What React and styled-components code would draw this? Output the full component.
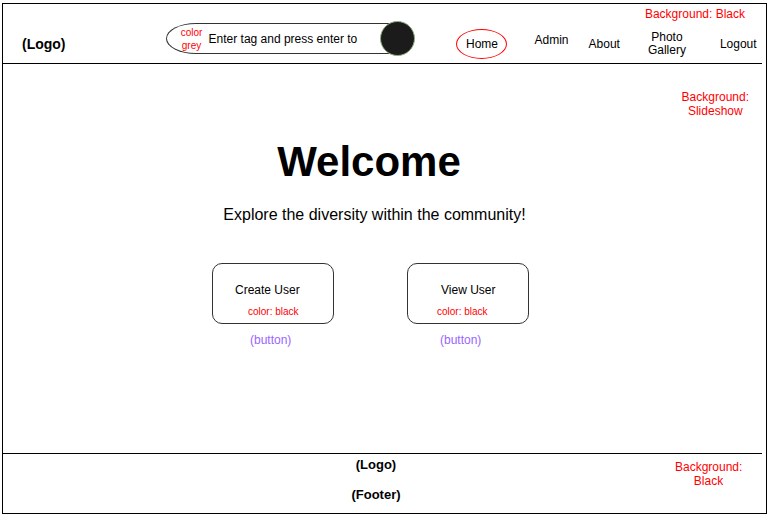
import styled, { createGlobalStyle } from "styled-components"

const Global = createGlobalStyle`
  html, body {
    margin: 0;
    background: #fff;
  }
  body {
    font-family: "Liberation Sans", Arial, sans-serif;
    color: #000;
  }
`;

const Frame = styled.div`
  box-sizing: border-box;
  width: 765px;
  height: 511px;
  margin: 3px 0 0 2px;
  border: 1px solid #000;
  display: flex;
  flex-direction: column;
`;

const Header = styled.header`
  box-sizing: border-box;
  height: 60px;
  margin-right: 4px;
  border-bottom: 1px solid #000;
  display: flex;
  flex-direction: column;
`;

const TopNote = styled.div`
  box-sizing: border-box;
  height: 17px;
  padding: 3px 17px 0 0;
  display: flex;
  justify-content: flex-end;
`;

const Note = styled.div`
  font-size: 12px;
  line-height: 14px;
  color: #f00;
  text-align: center;
`;

const NavRow = styled.nav`
  height: 42px;
  display: flex;
  align-items: flex-start;
`;

const Logo = styled.div`
  margin: 15px 0 0 19px;
  font-size: 14px;
  line-height: 16px;
  font-weight: bold;
`;

const Search = styled.div`
  margin-left: 100px;
  height: 35px;
  display: flex;
  align-items: center;
`;

const Field = styled.div`
  box-sizing: border-box;
  width: 231px;
  height: 31px;
  padding-left: 14px;
  border: 1px solid #333;
  border-right: none;
  border-radius: 30px 0 0 30px / 15.5px 0 0 15.5px;
  display: flex;
  align-items: center;
`;

const Hint = styled.div`
  width: 22px;
  font-size: 10px;
  line-height: 13px;
  color: #f00;
  text-align: center;
  padding-top: 1px;
`;

const Placeholder = styled.span`
  margin-left: 6px;
  font-size: 12px;
  line-height: 14px;
  white-space: nowrap;
`;

const GoButton = styled.div`
  box-sizing: border-box;
  flex: none;
  width: 35px;
  height: 35px;
  margin-left: -17px;
  border-radius: 50%;
  background: #1b1b1b;
  border: 1px solid #8fae7e;
`;

const HomeLink = styled.div`
  box-sizing: border-box;
  width: 51px;
  height: 30px;
  margin: 8px 0 0 41px;
  padding-left: 2px;
  border: 1px solid #f00;
  border-radius: 50%;
  display: flex;
  align-items: center;
  justify-content: center;
  font-size: 12px;
`;

const NavLink = styled.div`
  margin: ${p => p.$mt}px 0 0 ${p => p.$ml}px;
  font-size: 12px;
  line-height: ${p => (p.$two ? 13 : 14)}px;
  text-align: center;
  white-space: nowrap;
`;

const Main = styled.main`
  flex: 1;
  display: flex;
  flex-direction: column;
`;

const SideNote = styled(Note)`
  align-self: flex-end;
  margin: 26px 17px 0 0;
`;

const Hero = styled.section`
  display: flex;
  flex-direction: column;
  align-items: center;
  padding-right: 28px;
`;

const Title = styled.h1`
  margin: 20px 3px 0 0;
  font-size: 42px;
  line-height: 48px;
  font-weight: bold;
`;

const Lead = styled.p`
  margin: 20px 0 0 8px;
  font-size: 16px;
  line-height: 18px;
`;

const ButtonRow = styled.div`
  margin-top: 39px;
  display: flex;
  gap: 73px;
`;

const ButtonCol = styled.div`
  display: flex;
  flex-direction: column;
  align-items: flex-start;
`;

const ActionButton = styled.div`
  box-sizing: border-box;
  width: 122px;
  height: 61px;
  border: 1px solid #333;
  border-radius: 10px;
  display: flex;
  flex-direction: column;
  align-items: flex-start;
`;

const ButtonLabel = styled.span`
  margin: 19px 0 0 ${p => p.$x}px;
  font-size: 12px;
  line-height: 14px;
`;

const ButtonHint = styled.span`
  margin: 9px 0 0 ${p => p.$x}px;
  font-size: 10px;
  line-height: 12px;
  color: #f00;
`;

const Kind = styled.div`
  margin: 9px 0 0 ${p => p.$x}px;
  font-size: 12px;
  line-height: 14px;
  color: #9966ff;
`;

const Footer = styled.footer`
  box-sizing: border-box;
  height: 60px;
  margin-right: 4px;
  border-top: 1px solid #000;
  display: flex;
  align-items: flex-start;
`;

const FooterCenter = styled.div`
  width: 50px;
  margin: 3px 0 0 348px;
  display: flex;
  flex-direction: column;
  align-items: center;
  gap: 15px;
  font-size: 13px;
  line-height: 15px;
  font-weight: bold;
  white-space: nowrap;
`;

const FooterNote = styled(Note)`
  width: 67px;
  margin: 6px 0 0 274px;
`;

const App = () => {
  return (
    <>
      <Global />
      <Frame>
        <Header>
          <TopNote>
            <Note>Background: Black</Note>
          </TopNote>
          <NavRow>
            <Logo>(Logo)</Logo>
            <Search>
              <Field>
                <Hint>color<br />grey</Hint>
                <Placeholder>Enter tag and press enter to</Placeholder>
              </Field>
              <GoButton />
            </Search>
            <HomeLink>Home</HomeLink>
            <NavLink $ml={28} $mt={12}>Admin</NavLink>
            <NavLink $ml={20} $mt={16}>About</NavLink>
            <NavLink $ml={28} $mt={10} $two>Photo<br />Gallery</NavLink>
            <NavLink $ml={34} $mt={16}>Logout</NavLink>
          </NavRow>
        </Header>

        <Main>
          <SideNote>Background:<br />Slideshow</SideNote>
          <Hero>
            <Title>Welcome</Title>
            <Lead>Explore the diversity within the community!</Lead>
            <ButtonRow>
              <ButtonCol>
                <ActionButton>
                  <ButtonLabel $x={22}>Create User</ButtonLabel>
                  <ButtonHint $x={35}>color: black</ButtonHint>
                </ActionButton>
                <Kind $x={38}>(button)</Kind>
              </ButtonCol>
              <ButtonCol>
                <ActionButton>
                  <ButtonLabel $x={33}>View User</ButtonLabel>
                  <ButtonHint $x={29}>color: black</ButtonHint>
                </ActionButton>
                <Kind $x={33}>(button)</Kind>
              </ButtonCol>
            </ButtonRow>
          </Hero>
        </Main>

        <Footer>
          <FooterCenter>
            <span>(Logo)</span>
            <span>(Footer)</span>
          </FooterCenter>
          <FooterNote>Background:<br />Black</FooterNote>
        </Footer>
      </Frame>
    </>
  )
}

export default App
